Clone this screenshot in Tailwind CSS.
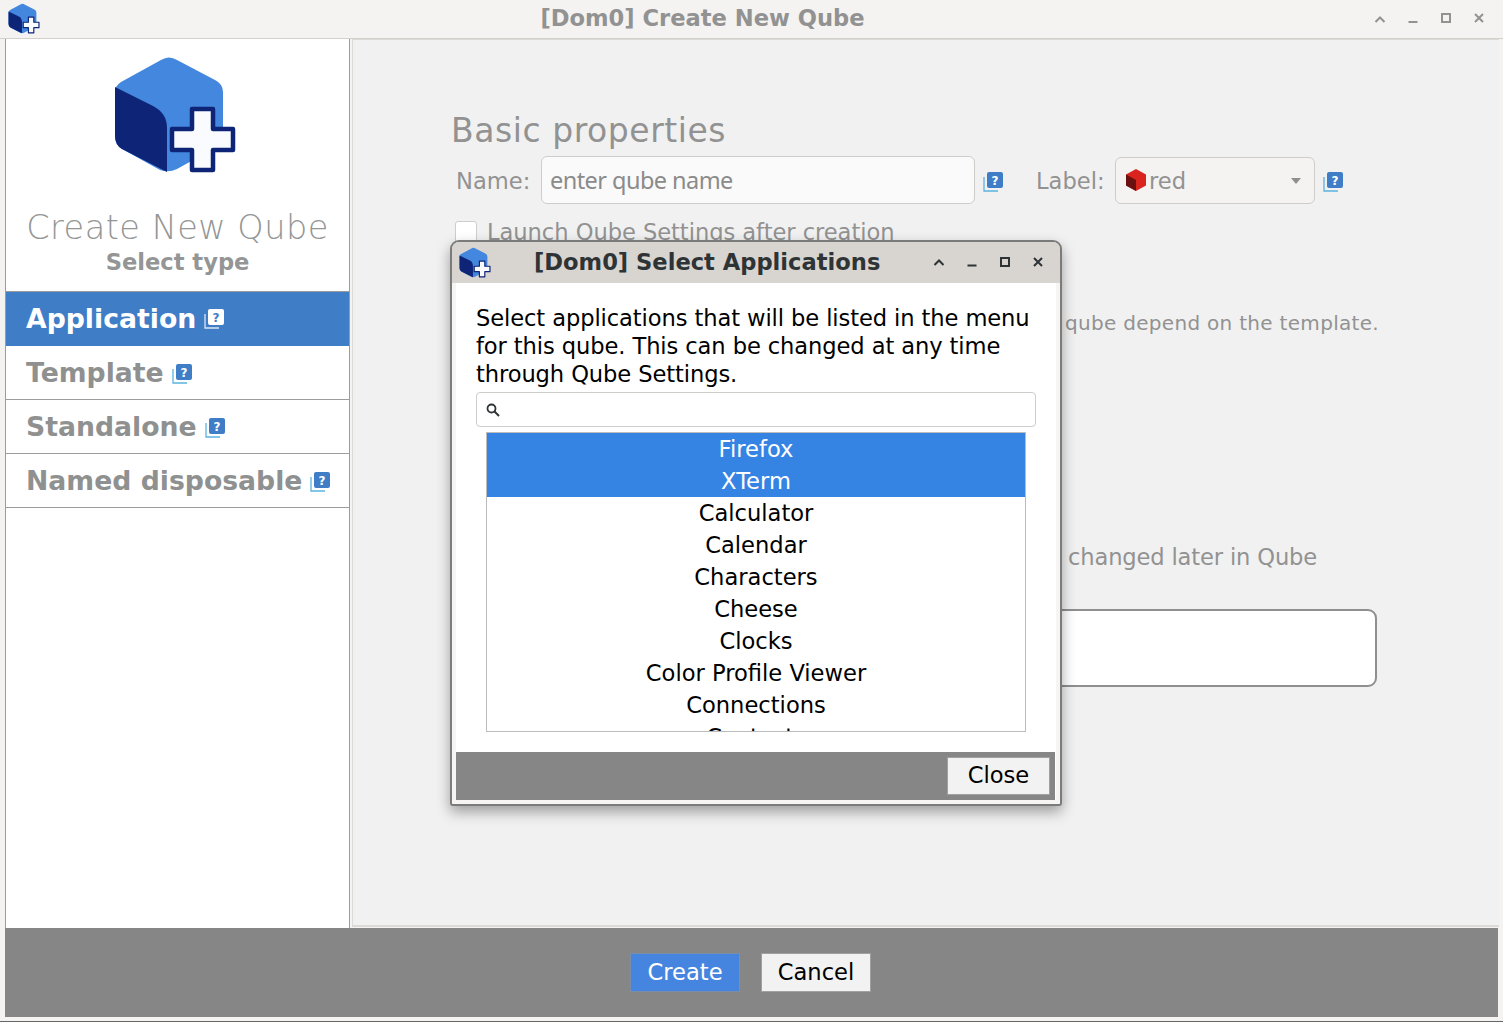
<!DOCTYPE html>
<html><head><meta charset="utf-8"><script src="https://cdn.jsdelivr.net/npm/@tailwindcss/browser@4"></script></head>
<body class="m-0">
<svg width="0" height="0" class="absolute">
<defs>
<symbol id="cube" viewBox="113 55 124 119">
<path d="M161 60Q169 55 177 60L215 80Q223 84 223 92V136Q223 144 215 148L177 169Q169 173 160 170L122 149Q115 145 115 136V92Q115 86 121 82Z" fill="#4487de"/>
<path d="M115 87L153 106Q167 113 167 128V172L122 149Q115 145 115 136Z" fill="#0e2476"/>
<path d="M192 109h21v20h20v21h-20v20h-21v-20h-20v-21h20z" fill="#f9fbff" stroke="#0e2476" stroke-width="4.500" stroke-linejoin="round"/>
</symbol>
<symbol id="help" viewBox="0 0 20 20">
<path d="M1 5v14h14" fill="none" stroke="#5bb3e0" stroke-width="1.300"/>
<rect x="4" y="0" width="16" height="16" rx="2" fill="#3f7dc7"/>
<text x="12" y="13" text-anchor="middle" font-family="DejaVu Sans" font-weight="700" font-size="12" fill="#fff">?</text>
</symbol>
<symbol id="helpw" viewBox="0 0 20 20">
<path d="M1 5v14h14" fill="none" stroke="#dbe6f4" stroke-width="1.300"/>
<rect x="4" y="0" width="16" height="16" rx="2" fill="#fff"/>
<text x="12" y="13" text-anchor="middle" font-family="DejaVu Sans" font-weight="700" font-size="12" fill="#3f7dc7">?</text>
</symbol>
</defs>
</svg>

<div class="relative w-[1503px] h-[1022px] overflow-hidden flex flex-col bg-[#f4f3f1] border-b border-[#666] font-['DejaVu_Sans',sans-serif]">
  <header class="relative h-[39px] shrink-0 flex items-center justify-center text-[22.6px] font-bold text-[#929292] border-b border-[#d3d0cc] pr-[98px]">
    <svg class="absolute left-[8px] top-[3px] w-[32px] h-[31px]"><use href="#cube"/></svg>
    <span>[Dom0] Create New Qube</span>
    <div class="absolute right-0 top-0 h-full">
      <svg class="absolute right-[116px] top-[14px]" width="14" height="10" viewBox="0 0 14 10"><path d="M2.500 8l4.500-4.500L11.500 8" fill="none" stroke="#929292" stroke-width="2"/></svg>
      <svg class="absolute right-[83px] top-[14px]" width="14" height="10" viewBox="0 0 14 10"><path d="M2.500 8h9" fill="none" stroke="#929292" stroke-width="2"/></svg>
      <svg class="absolute right-[50px] top-[12px]" width="14" height="12" viewBox="0 0 14 12"><rect x="3" y="2" width="8" height="8" fill="none" stroke="#929292" stroke-width="2"/></svg>
      <svg class="absolute right-[17px] top-[12px]" width="14" height="12" viewBox="0 0 14 12"><path d="M3 2l8 8M11 2l-8 8" fill="none" stroke="#929292" stroke-width="2"/></svg>
    </div>
  </header>

  <div class="flex-1 min-h-0 flex pl-[5px] pr-[4px]">
    <aside class="w-[345px] shrink-0 bg-white border-l border-r border-[#9c9c9c] flex flex-col">
      <div class="flex pt-[16px] pl-[107px]">
        <svg class="w-[124px] h-[119px]"><use href="#cube"/></svg>
      </div>
      <div class="mt-[32px] text-center text-[33.5px] leading-[44px] font-extralight text-[#949696] tracking-[0.5px]">Create New Qube</div>
      <div class="text-center text-[22.6px] leading-[26px] font-bold text-[#949696] mt-[-1px]">Select type</div>
      <nav class="mt-[16px] flex flex-col text-[26.7px] font-bold text-[#8f9191]">
        <div class="h-[55px] flex items-center pl-[20px] gap-[8px] bg-[#3f7dc7] text-white border-t border-[#9c9c9c]"><span>Application</span><svg class="w-[20px] h-[20px]"><use href="#helpw"/></svg></div>
        <div class="h-[54px] flex items-center pl-[20px] pt-[2px] gap-[8px] border-b border-[#9c9c9c]"><span>Template</span><svg class="w-[20px] h-[20px]"><use href="#help"/></svg></div>
        <div class="h-[54px] flex items-center pl-[20px] pt-[2px] gap-[8px] border-b border-[#9c9c9c]"><span>Standalone</span><svg class="w-[20px] h-[20px]"><use href="#help"/></svg></div>
        <div class="h-[54px] flex items-center pl-[20px] pt-[2px] gap-[8px] border-b border-[#9c9c9c]"><span>Named disposable</span><svg class="w-[20px] h-[20px]"><use href="#help"/></svg></div>
      </nav>
    </aside>

    <main class="flex-1 ml-[2px] mb-[1px] bg-[#f1f1f1] border-t border-l border-b-2 border-[#dcdad7] pl-[99px] text-[#929292] flex flex-col">
      <h2 class="mt-[71px] -ml-[1px] h-[40px] leading-[40px] text-[33px] font-normal tracking-[0.55px]">Basic properties</h2>
      <div class="mt-[5px] h-[48px] flex items-center text-[22.6px]">
        <span class="ml-[4px] w-[85px] pt-[3px]">Name:</span>
        <div class="w-[434px] h-[48px] bg-[#fafafa] border border-[#cfcdca] rounded-[6px] flex items-center pl-[8px] pt-[2px] font-['Noto_Sans',sans-serif] text-[23.5px] tracking-[-0.55px] text-[#8b8b8b]">enter qube name</div>
        <svg class="ml-[8px] mt-[3px] w-[20px] h-[20px]"><use href="#help"/></svg>
        <span class="ml-[33px] w-[79px] pt-[3px]">Label:</span>
        <div class="w-[200px] h-[47px] mt-[1px] bg-[#f4f3f1] border border-[#cfcdca] rounded-[6px] flex items-center pl-[10px] relative">
          <svg class="mb-[2px]" width="20" height="22" viewBox="0 0 20 22"><path d="M10 0l10 5.500v11L10 22 0 16.500v-11z" fill="#d9251d"/><path d="M0 5.500l10 5.500v11L0 16.500z" fill="#6b1010"/></svg>
          <span class="ml-[3px] pt-[2px]">red</span>
          <svg class="absolute right-[12px] top-[20px]" width="12" height="6" viewBox="0 0 12 6"><path d="M1 0h10L6 6z" fill="#8f8f8f"/></svg>
        </div>
        <svg class="ml-[8px] mt-[3px] w-[20px] h-[20px]"><use href="#help"/></svg>
      </div>
      <label class="mt-[17px] h-[24px] flex items-center text-[22.6px] text-[#929292]">
        <span class="ml-[3px] mb-[2px] w-[22px] h-[22px] bg-white border border-[#cfcdca] rounded-[3px]"></span>
        <span class="ml-[10px] whitespace-nowrap tracking-[-0.05px]">Launch Qube Settings after creation</span>
      </label>
      <p class="mt-[66px] h-[24px] leading-[24px] text-[20px] pl-[613px] whitespace-nowrap tracking-[0.3px]">qube depend on the template.</p>
      <p class="mt-[208px] h-[28px] leading-[28px] text-[22.6px] pl-[616px] whitespace-nowrap tracking-[-0.15px]">changed later in Qube</p>
      <div class="mt-[38px] w-[925px] h-[78px] bg-white border-2 border-[#8f8f8f] rounded-[9px]"></div>
    </main>
  </div>

  <footer class="h-[89px] shrink-0 ml-[5px] mr-[5px] mb-[4px] bg-[#868686] flex items-center justify-center gap-[21px] text-[22.6px] pr-[2px]">
    <button class="w-[110px] h-[39px] bg-[#4585e0] text-white border border-[#7a8ea8]">Create</button>
    <button class="w-[110px] h-[39px] bg-[#f2f2f2] text-black border border-[#a0a0a0]">Cancel</button>
  </footer>

  <section class="absolute left-[450px] top-[240px] w-[612px] h-[566px] flex flex-col bg-[#f6f5f4] border-2 border-[#7b7b7b] rounded-t-[9px] rounded-b-[3px] shadow-[0_6px_14px_rgba(0,0,0,0.35)] overflow-hidden">
    <div class="relative h-[41px] shrink-0 bg-[#d8d4d0] flex items-center text-[22.6px] font-bold text-[#2e3436]">
      <svg class="absolute left-[7px] top-[5px] w-[32px] h-[31px]"><use href="#cube"/></svg>
      <span class="ml-[82px]">[Dom0] Select Applications</span>
      <svg class="absolute left-[480px] top-[15px]" width="14" height="10" viewBox="0 0 14 10"><path d="M2.500 8l4.500-4.500L11.500 8" fill="none" stroke="#2e3436" stroke-width="2"/></svg>
      <svg class="absolute left-[513px] top-[15px]" width="14" height="10" viewBox="0 0 14 10"><path d="M2.500 8.500h9" fill="none" stroke="#2e3436" stroke-width="2"/></svg>
      <svg class="absolute left-[546px] top-[14px]" width="14" height="12" viewBox="0 0 14 12"><rect x="3" y="2" width="8" height="8" fill="none" stroke="#2e3436" stroke-width="2"/></svg>
      <svg class="absolute left-[579px] top-[14px]" width="14" height="12" viewBox="0 0 14 12"><path d="M3 2l8 8M11 2l-8 8" fill="none" stroke="#2e3436" stroke-width="2"/></svg>
    </div>
    <div class="flex-1 min-h-0 ml-[4px] mr-[4px] bg-white flex flex-col">
      <p class="mt-[21px] ml-[20px] text-[22.6px] leading-[28px] text-black whitespace-nowrap tracking-[-0.1px]">Select applications that will be listed in the menu<br>for this qube. This can be changed at any time<br>through Qube Settings.</p>
      <div class="mt-[4px] ml-[20px] w-[560px] h-[35px] bg-white border border-[#cfcdca] rounded-[4px] flex items-center pl-[9px]">
        <svg width="14" height="14" viewBox="0 0 14 14"><circle cx="5.500" cy="5.500" r="4" fill="none" stroke="#2e3436" stroke-width="1.800"/><path d="M8.500 8.500l4.500 4.500" stroke="#2e3436" stroke-width="2"/></svg>
      </div>
      <div class="mt-[5px] ml-[30px] w-[540px] h-[300px] border border-[#bcbcbc] overflow-hidden text-center text-[22.6px] leading-[32px] text-black">
        <div class="bg-[#3584e4] text-white">Firefox</div>
        <div class="bg-[#3584e4] text-white">XTerm</div>
        <div>Calculator</div>
        <div>Calendar</div>
        <div>Characters</div>
        <div>Cheese</div>
        <div>Clocks</div>
        <div>Color Profile Viewer</div>
        <div>Connections</div>
        <div>Contacts</div>
      </div>
      <div class="mt-[20px] mr-[1px] h-[48px] bg-[#868686] flex items-center justify-end pr-[5px]">
        <button class="w-[103px] h-[38px] bg-[#f2f2f2] text-black text-[22.6px] border border-[#a0a0a0]">Close</button>
      </div>
    </div>
    <div class="h-[4px] shrink-0 bg-[#f6f5f4]"></div>
  </section>
</div>
</body></html>
